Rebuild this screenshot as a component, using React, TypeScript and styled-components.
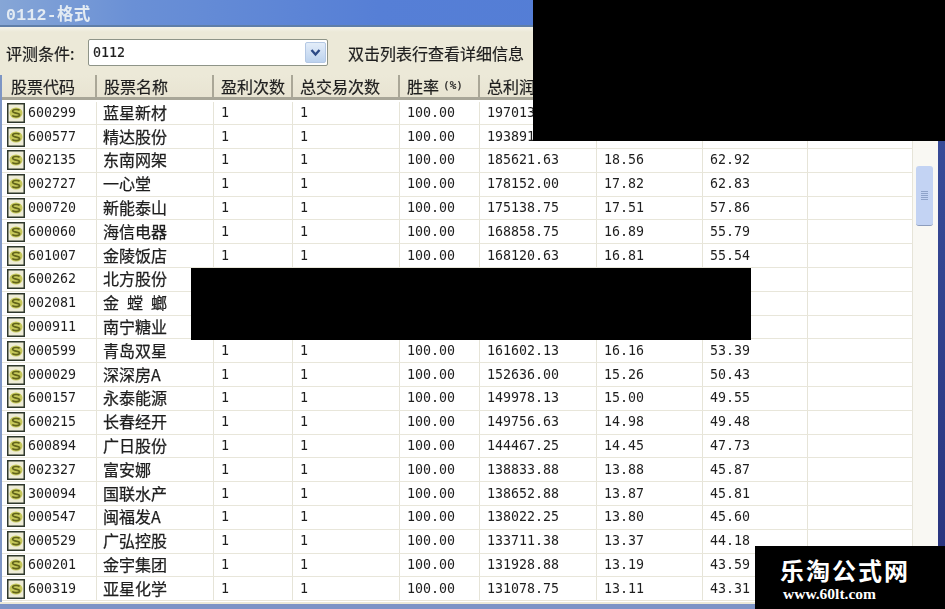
import React from "react";
import styled, { createGlobalStyle } from "styled-components";

const Global = createGlobalStyle`
  html, body { margin: 0; padding: 0; background: #fff; }
`;

const COLS = "95px 117px 79px 107px 80px 117px 106px 105px 105px";
const CJK = `"Noto Sans CJK SC", "Liberation Sans", sans-serif`;
const MONO = `"DejaVu Sans Mono", "Noto Sans CJK SC", monospace`;

const Screen = styled.div`
  position: relative;
  width: 945px;
  height: 609px;
  overflow: hidden;
  background: #000;
`;
const Frame = styled.div`
  width: 945px;
  height: 609px;
  display: flex;
  flex-direction: column;
  background: #ece9d8;
  filter: blur(0.5px);
  color: #1e1e1e;
  font-family: ${CJK};
`;
const TitleBar = styled.div`
  height: 27px;
  flex: none;
  display: flex;
  align-items: center;
  padding-left: 6px;
  box-sizing: border-box;
  background: linear-gradient(90deg, #86a6d6 0%, #6a90d6 14%, #567fd6 40%, #4f7ad4 100%);
  border-bottom: 2px solid #5f7ea8;
  color: #e3ebf3;
  font-family: "Liberation Mono", "Noto Sans CJK SC", monospace;
  font-size: 16.5px;
  font-weight: 700;
  letter-spacing: 0.3px;
`;
const Toolbar = styled.div`
  height: 48px;
  flex: none;
  display: flex;
  align-items: center;
  padding: 3px 0 0 6px;
  box-sizing: border-box;
  font-size: 16px;
  background: linear-gradient(180deg, #f4f3ea 0, #ece9d8 5px);
  -webkit-text-stroke: 0.2px #1e1e1e;
`;
const FieldLabel = styled.span`
  width: 82px;
  flex: none;
`;
const Combo = styled.div`
  width: 240px;
  height: 27px;
  flex: none;
  display: flex;
  align-items: center;
  justify-content: space-between;
  padding: 0 1px 0 4px;
  box-sizing: border-box;
  background: #fff;
  border: 1px solid #8e9488;
  border-radius: 2px;
  font-family: ${MONO};
  font-size: 13.3px;
`;
const ComboButton = styled.span`
  width: 21px;
  height: 21px;
  display: flex;
  align-items: center;
  justify-content: center;
  border-radius: 2px;
  background: linear-gradient(180deg, #e3edf9, #bcd2ee);
  border: 1px solid #b4c8e4;
  box-sizing: border-box;
`;
const Hint = styled.span`
  margin-left: 20px;
  white-space: nowrap;
`;
const Body = styled.div`
  flex: none;
  height: 527px;
  display: flex;
  background: #ece9d8;
  border-left: 2px solid #7d95c4;
`;
const TableArea = styled.div`
  width: 911px;
  flex: none;
  display: flex;
  flex-direction: column;
  background: #fff;
`;
const HeaderRow = styled.div`
  height: 25px;
  flex: none;
  display: grid;
  grid-template-columns: ${COLS};
  background: linear-gradient(180deg, #ece9d8, #e8e4d2);
  border-bottom: 3px solid #a8a698;
  box-sizing: border-box;
  font-size: 16px;
  line-height: 20px;
  -webkit-text-stroke: 0.2px #1e1e1e;
`;
const HeaderCell = styled.div`
  display: flex;
  align-items: center;
  padding-left: 7px;
  white-space: nowrap;
  box-sizing: border-box;
  border-right: 2px solid #aaa797;
  &:first-child { padding-left: 9px; }
`;
const PercentUnit = styled.span`
  margin-left: 4px;
  font-family: ${MONO};
  font-size: 11px;
`;
const Rows = styled.div`
  flex: none;
  display: grid;
  grid-auto-rows: 23.8px;
  padding-top: 1.5px;
  background: #fff;
`;
const Row = styled.div`
  display: grid;
  grid-template-columns: ${COLS};
  border-bottom: 1px solid #e8e6da;
  box-sizing: border-box;
`;
const Cell = styled.div<{ $cjk?: boolean }>`
  display: flex;
  align-items: center;
  padding-left: ${(p) => (p.$cjk ? "6px" : "7px")};
  padding-bottom: ${(p) => (p.$cjk ? "2px" : "0")};
  border-right: 1px solid #e6e4d8;
  box-sizing: border-box;
  white-space: nowrap;
  line-height: 18px;
  font-family: ${(p) => (p.$cjk ? CJK : MONO)};
  font-size: ${(p) => (p.$cjk ? "16px" : "13.3px")};
  -webkit-text-stroke: ${(p) => (p.$cjk ? "0.25px #1e1e1e" : "0")};
`;
const CodeCell = styled(Cell)`
  padding-left: 5px;
  gap: 3px;
`;
const ScrollTrack = styled.div`
  position: relative;
  flex: none;
  width: 25px;
  background: #f9f8f3;
`;
const ScrollThumb = styled.div`
  position: absolute;
  top: 91px;
  left: 3px;
  width: 17px;
  height: 59px;
  display: flex;
  align-items: center;
  justify-content: center;
  background: #c3d3f3;
  border-bottom: 1px solid #8d9dbd;
  border-radius: 3px;
`;
const Grip = styled.span`
  width: 7px;
  height: 9px;
  background: repeating-linear-gradient(180deg, #8fa3c9 0 1px, transparent 1px 2px);
`;
const RightEdge = styled.div`
  flex: 1;
  background: linear-gradient(180deg, #3a4f9c, #28327c);
`;
const BottomEdge = styled.div`
  flex: 1;
  background: #ece9d8;
  border-bottom: 5px solid #7c93c6;
  box-sizing: border-box;
`;
const Redaction = styled.div<{ $x: number; $y: number; $w: number; $h: number }>`
  position: absolute;
  left: ${(p) => p.$x}px;
  top: ${(p) => p.$y}px;
  width: ${(p) => p.$w}px;
  height: ${(p) => p.$h}px;
  background: #000;
`;
const Watermark = styled.div`
  position: absolute;
  left: 755px;
  top: 546px;
  width: 190px;
  height: 63px;
  background: #000;
  color: #fff;
  box-sizing: border-box;
  padding: 9px 0 0 25px;
`;
const WatermarkTitle = styled.div`
  font-family: ${CJK};
  font-weight: 700;
  font-size: 24px;
  line-height: 30px;
  letter-spacing: 2px;
  white-space: nowrap;
`;
const WatermarkUrl = styled.div`
  font-family: "Liberation Serif", serif;
  font-weight: 700;
  font-size: 15.5px;
  line-height: 16px;
  margin: 1px 0 0 3px;
  white-space: nowrap;
`;

const CoinIcon = () => (
  <svg width="18" height="20" viewBox="0 0 18 20" style={{ flex: "none" }}>
    <rect x="0.75" y="0.75" width="16.5" height="18.5" fill="#eeecd6" stroke="#2f382c" strokeWidth="1.5" />
    <ellipse cx="9" cy="10" rx="6.5" ry="5.5" fill="#c6c85a" />
    <path d="M12.6 7.4C11.6 6.2 5.6 6 5.6 8.2c0 2.3 7 1.4 7 3.7 0 2.2-6.2 2-7.4.6" fill="none" stroke="#62641a" strokeWidth="1.7" />
  </svg>
);

const data: string[][] = [
  ["600299", "蓝星新材", "1", "1", "100.00", "197013", "", ""],
  ["600577", "精达股份", "1", "1", "100.00", "193891", "", ""],
  ["002135", "东南网架", "1", "1", "100.00", "185621.63", "18.56", "62.92"],
  ["002727", "一心堂", "1", "1", "100.00", "178152.00", "17.82", "62.83"],
  ["000720", "新能泰山", "1", "1", "100.00", "175138.75", "17.51", "57.86"],
  ["600060", "海信电器", "1", "1", "100.00", "168858.75", "16.89", "55.79"],
  ["601007", "金陵饭店", "1", "1", "100.00", "168120.63", "16.81", "55.54"],
  ["600262", "北方股份", "", "", "", "", "", ""],
  ["002081", "金\u2002螳\u2002螂", "", "", "", "", "", ""],
  ["000911", "南宁糖业", "", "", "", "", "", ""],
  ["000599", "青岛双星", "1", "1", "100.00", "161602.13", "16.16", "53.39"],
  ["000029", "深深房A", "1", "1", "100.00", "152636.00", "15.26", "50.43"],
  ["600157", "永泰能源", "1", "1", "100.00", "149978.13", "15.00", "49.55"],
  ["600215", "长春经开", "1", "1", "100.00", "149756.63", "14.98", "49.48"],
  ["600894", "广日股份", "1", "1", "100.00", "144467.25", "14.45", "47.73"],
  ["002327", "富安娜", "1", "1", "100.00", "138833.88", "13.88", "45.87"],
  ["300094", "国联水产", "1", "1", "100.00", "138652.88", "13.87", "45.81"],
  ["000547", "闽福发A", "1", "1", "100.00", "138022.25", "13.80", "45.60"],
  ["000529", "广弘控股", "1", "1", "100.00", "133711.38", "13.37", "44.18"],
  ["600201", "金宇集团", "1", "1", "100.00", "131928.88", "13.19", "43.59"],
  ["600319", "亚星化学", "1", "1", "100.00", "131078.75", "13.11", "43.31"],
];

const headers = ["股票代码", "股票名称", "盈利次数", "总交易次数", "胜率", "总利润", "", "", ""];

export default function App() {
  return (
    <Screen>
      <Global />
      <Frame>
        <TitleBar>0112-格式</TitleBar>
        <Toolbar>
          <FieldLabel>评测条件:</FieldLabel>
          <Combo>
            0112
            <ComboButton>
              <svg width="11" height="9" viewBox="0 0 11 9">
                <path d="M1.5 2 5.5 6.5 9.5 2" fill="none" stroke="#2c4a86" strokeWidth="2.4" />
              </svg>
            </ComboButton>
          </Combo>
          <Hint>双击列表行查看详细信息</Hint>
        </Toolbar>
        <Body>
          <TableArea>
            <HeaderRow>
              {headers.map((h, i) => (
                <HeaderCell key={i}>
                  {h}
                  {h === "胜率" && <PercentUnit>(%)</PercentUnit>}
                </HeaderCell>
              ))}
            </HeaderRow>
            <Rows>
              {data.map((r) => (
                <Row key={r[0]}>
                  <CodeCell>
                    <CoinIcon />
                    {r[0]}
                  </CodeCell>
                  <Cell $cjk>{r[1]}</Cell>
                  <Cell>{r[2]}</Cell>
                  <Cell>{r[3]}</Cell>
                  <Cell>{r[4]}</Cell>
                  <Cell>{r[5]}</Cell>
                  <Cell>{r[6]}</Cell>
                  <Cell>{r[7]}</Cell>
                  <Cell />
                </Row>
              ))}
            </Rows>
          </TableArea>
          <ScrollTrack>
            <ScrollThumb>
              <Grip />
            </ScrollThumb>
          </ScrollTrack>
          <RightEdge />
        </Body>
        <BottomEdge />
      </Frame>
      <Redaction $x={533} $y={0} $w={412} $h={141} />
      <Redaction $x={191} $y={268} $w={560} $h={72} />
      <Watermark>
        <WatermarkTitle>乐淘公式网</WatermarkTitle>
        <WatermarkUrl>www.60lt.com</WatermarkUrl>
      </Watermark>
    </Screen>
  );
}
